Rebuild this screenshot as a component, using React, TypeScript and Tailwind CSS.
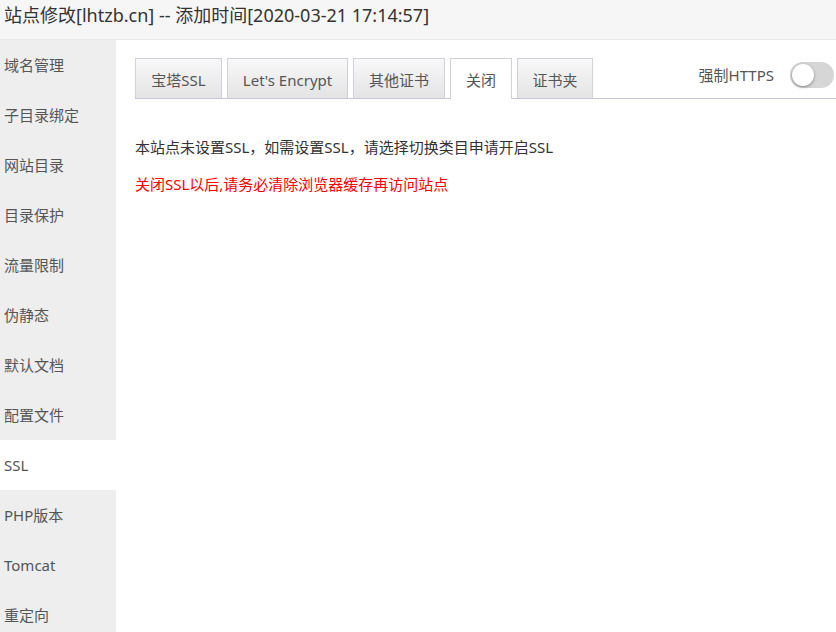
import React from "react";

const items = ["域名管理","子目录绑定","网站目录","目录保护","流量限制","伪静态","默认文档","配置文件","SSL","PHP版本","Tomcat","重定向"];
const tabs = ["宝塔SSL","Let's Encrypt","其他证书","关闭","证书夹"];
const tabW = ["w-[87px]","w-[121px]","w-[92px]","w-[62px]","w-[76px]"];

export default function App() {
  return (
    <div className="w-[836px] h-[632px] overflow-hidden bg-white flex flex-col text-[#555]" style={{fontFamily:'"Noto Sans","Noto Sans CJK SC",sans-serif'}}>
      <div className="h-[40px] shrink-0 bg-[#f6f6f6] border-b border-[#e8e8e8] pl-[4px] text-[18px] leading-[30px] text-[#333]">
        站点修改[lhtzb.cn] -- 添加时间[2020-03-21 17:14:57]
      </div>
      <div className="flex flex-1 min-h-0">
        <div className="w-[116px] shrink-0 bg-[#eeeeee] flex flex-col">
          {items.map((t) => (
            <div key={t} className={`h-[50px] shrink-0 flex items-center pl-[4px] text-[15px] text-[#555] ${t === "SSL" ? "bg-white" : ""}`}>{t}</div>
          ))}
        </div>
        <div className="flex-1 pl-[19px] pt-[19px]">
          <div className="flex items-end border-b border-[#c8c8d8] h-[40px]">
            {tabs.map((t, i) => (
              <div key={t} className={`${tabW[i]} h-[40px] mr-[5px] pt-[3px] flex items-center justify-center text-[15px] text-[#555] border border-[#d0d0d8] border-b-0 ${t === "关闭" ? "bg-white h-[41px] -mb-px" : "bg-gradient-to-b from-[#f8f8f8] to-[#e4e4e4]"}`}>{t}</div>
            ))}
            <div className="flex-1" />
            <div className="self-start flex items-center h-[30px] mt-px">
              <span className="text-[15px] text-[#555] mr-[16px]">强制HTTPS</span>
              <div className="w-[44px] h-[26px] rounded-full bg-[#d6d6d6] mr-[2px] flex items-center p-[2px]">
                <div className="w-[22px] h-[22px] rounded-full bg-white shadow-[0_1px_3px_rgba(0,0,0,0.4)]" />
              </div>
            </div>
          </div>
          <div className="mt-[38px] text-[15px] text-[#333] leading-[20px]">本站点未设置SSL，如需设置SSL，请选择切换类目申请开启SSL</div>
          <div className="mt-[17px] text-[15px] text-[#ff0000] leading-[20px]">关闭SSL以后,请务必清除浏览器缓存再访问站点</div>
        </div>
      </div>
    </div>
  );
}
